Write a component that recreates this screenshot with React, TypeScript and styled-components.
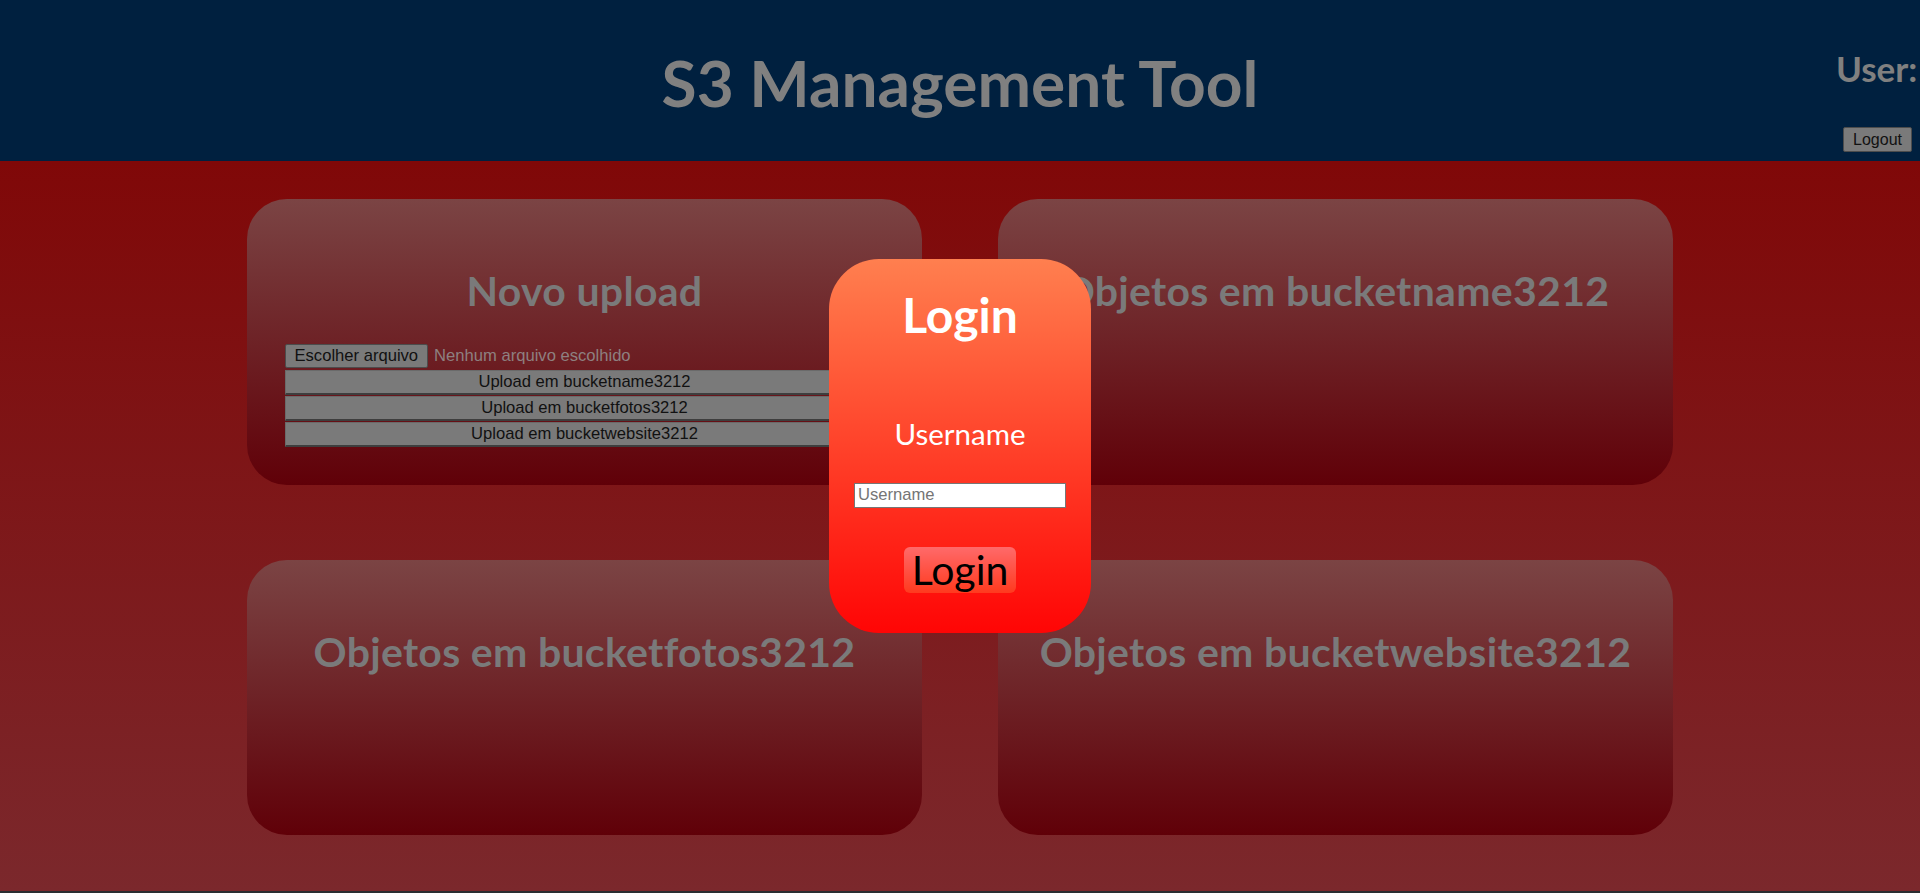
import React from "react";
import styled, { createGlobalStyle } from "styled-components";

const GlobalStyle = createGlobalStyle`
  html { background: #2b2e32; }
  body { margin: 0; font-family: "Lato", "Open Sans", sans-serif; }
  * { box-sizing: border-box; }
`;

const Page = styled.div`
  height: 891px;
  display: flex;
  flex-direction: column;
  overflow: hidden;
`;

const Header = styled.header`
  height: 161px;
  flex: none;
  background: #00203f;
  display: grid;
  grid-template-columns: 1fr auto 1fr;
  align-items: start;
`;

const Title = styled.h1`
  grid-column: 2;
  margin: 45px 0 0;
  font-size: 64px;
  line-height: 1.2;
  font-weight: 700;
  color: #808080;
  white-space: nowrap;
`;

const UserBox = styled.div`
  grid-column: 3;
  justify-self: end;
  width: 76px;
  margin-right: 8px;
  text-align: right;
  white-space: nowrap;
`;

const UserLabel = styled.div`
  margin-top: 47px;
  font-size: 35px;
  line-height: 1.2;
  font-weight: 700;
  color: #808080;
  text-align: left;
`;

const GrayButton = styled.button`
  font-family: "Liberation Sans", Arial, sans-serif;
  font-size: 16.6px;
  color: #111;
  background: #7a7a7a;
  border: 1px solid #4c4c4c;
  border-radius: 2px;
  cursor: pointer;
`;

const LogoutButton = styled(GrayButton)`
  margin-top: 38px;
  height: 25px;
  padding: 0 9px;
  font-size: 16px;
`;

const Main = styled.main`
  flex: 1;
  background: linear-gradient(#800808, #7b282c);
  padding-top: 38px;
  display: grid;
  grid-template-columns: 675px 675px;
  grid-auto-rows: auto;
  column-gap: 76px;
  row-gap: 75px;
  justify-content: center;
  align-content: start;
`;

const Card = styled.section`
  min-height: 275px;
  border-radius: 40px;
  background: linear-gradient(#7b4444, #600008);
  padding: 0 37px 38px;
  display: flex;
  flex-direction: column;
  align-items: center;
`;

const CardTitle = styled.h2`
  margin: 68px 0 29px;
  font-size: 41px;
  letter-spacing: 0.3px;
  line-height: 48px;
  font-weight: 700;
  color: #7a7a7a;
  white-space: nowrap;
`;

const UploadForm = styled.form`
  width: 600px;
  display: flex;
  flex-direction: column;
`;

const FileRow = styled.div`
  display: flex;
  align-items: center;
  height: 24px;
  gap: 6px;
`;

const FileButton = styled.label`
  font-family: "Liberation Sans", Arial, sans-serif;
  font-size: 16.6px;
  color: #111;
  background: #7a7a7a;
  border: 1px solid #4c4c4c;
  border-radius: 2px;
  height: 24px;
  line-height: 22px;
  padding: 0 9px;
  cursor: pointer;
`;

const FileStatus = styled.span`
  font-family: "Liberation Sans", Arial, sans-serif;
  font-size: 16.6px;
  color: #8e8080;
`;

const HiddenInput = styled.input`
  display: none;
`;

const UploadButton = styled(GrayButton)<{ $first?: boolean }>`
  display: block;
  width: 600px;
  height: 25px;
  margin-top: ${(p) => (p.$first ? "2px" : "1px")};
  padding: 0;
  border-radius: 0;
  border-width: 1px 1px 2px 1px;
  border-color: #6a6a6a #6a6a6a #3e3e3e #6a6a6a;
`;

const Modal = styled.div`
  position: fixed;
  left: 829px;
  top: 259px;
  width: 262px;
  height: 374px;
  border-radius: 50px;
  background: linear-gradient(#ff7f4f, #ff0505);
  display: flex;
  flex-direction: column;
  align-items: center;
`;

const ModalTitle = styled.h2`
  margin: 27px 0 0;
  font-size: 48px;
  line-height: 1.2;
  font-weight: 700;
  color: #fff;
`;

const FieldLabel = styled.label`
  margin-top: 73px;
  font-size: 29.5px;
  line-height: 34px;
  color: #fff;
`;

const TextInput = styled.input`
  margin-top: 32px;
  width: 212px;
  height: 25px;
  padding: 1px 3px;
  font-family: "Liberation Sans", Arial, sans-serif;
  font-size: 16.6px;
  background: #fff;
  border: 1px solid #767676;
  outline: none;
  &::placeholder { color: #757575; }
`;

const LoginButton = styled.button`
  margin-top: 39px;
  width: 112px;
  height: 46px;
  border: none;
  border-radius: 6px;
  background: linear-gradient(#ff6a6a, #ff3a1e);
  font-family: "Lato", "Open Sans", sans-serif;
  font-size: 41px;
  line-height: 46px;
  padding: 0;
  color: #000;
  cursor: pointer;
`;

const buckets = ["bucketname3212", "bucketfotos3212", "bucketwebsite3212"];

export default function App() {
  return (
    <>
      <GlobalStyle />
      <Page>
        <Header>
          <Title>S3 Management Tool</Title>
          <UserBox>
            <UserLabel>User:</UserLabel>
            <LogoutButton>Logout</LogoutButton>
          </UserBox>
        </Header>
        <Main>
          <Card>
            <CardTitle>Novo upload</CardTitle>
            <UploadForm onSubmit={(e) => e.preventDefault()}>
              <FileRow>
                <FileButton htmlFor="file">Escolher arquivo</FileButton>
                <HiddenInput id="file" type="file" />
                <FileStatus>Nenhum arquivo escolhido</FileStatus>
              </FileRow>
              {buckets.map((b, i) => (
                <UploadButton key={b} $first={i === 0} type="button">
                  Upload em {b}
                </UploadButton>
              ))}
            </UploadForm>
          </Card>
          <Card>
            <CardTitle>Objetos em bucketname3212</CardTitle>
          </Card>
          <Card>
            <CardTitle>Objetos em bucketfotos3212</CardTitle>
          </Card>
          <Card>
            <CardTitle>Objetos em bucketwebsite3212</CardTitle>
          </Card>
        </Main>
      </Page>
      <Modal role="dialog">
        <ModalTitle>Login</ModalTitle>
        <FieldLabel htmlFor="username">Username</FieldLabel>
        <TextInput id="username" placeholder="Username" />
        <LoginButton>Login</LoginButton>
      </Modal>
    </>
  );
}
